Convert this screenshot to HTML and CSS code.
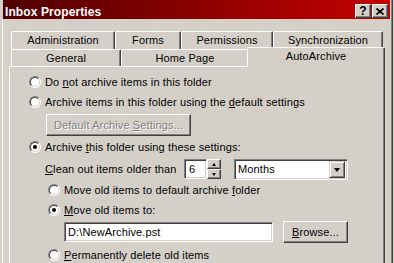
FILE: index.html
```html
<!DOCTYPE html>
<html>
<head>
<meta charset="utf-8">
<link rel="stylesheet" href="styles.css">
</head>
<body>
<div class="window">
  <div class="titlebar">
    <span class="title">Inbox Properties</span>
    <div class="tbtns">
      <span class="tbtn help">?</span>
      <span class="tbtn close"><svg width="8" height="7" viewBox="0 0 8 7"><path d="M0.5 0.5L7.5 6.5M7.5 0.5L0.5 6.5" stroke="#000" stroke-width="1.7"/></svg></span>
    </div>
  </div>
  <div class="client">
    <div class="tabs">
      <div class="tabrow row1">
        <div class="tab">Administration</div>
        <div class="tab">Forms</div>
        <div class="tab">Permissions</div>
        <div class="tab">Synchronization</div>
      </div>
      <div class="tabrow row2">
        <div class="tab">General</div>
        <div class="tab">Home Page</div>
        <div class="tab sel">AutoArchive</div>
      </div>
    </div>
    <div class="panel">
      <div class="row r-top"><span class="radio"></span><span class="lbl">Do <u>n</u>ot archive items in this folder</span></div>
      <div class="row"><span class="radio"></span><span class="lbl">Archive items in this folder using the <u>d</u>efault settings</span></div>
      <div class="btnrow"><span class="btn disabled"><span>Default Archive <u>S</u>ettings...</span></span></div>
      <div class="row r3"><span class="radio on"></span><span class="lbl">Archive <u>t</u>his folder using these settings:</span></div>
      <div class="clean">
        <span class="clean-lbl"><u>C</u>lean out items older than</span>
        <span class="field num">6</span>
        <span class="spin"><span class="sbtn up"></span><span class="sbtn down"></span></span>
        <span class="field combo"><span class="cval">Months</span><span class="dd"></span></span>
      </div>
      <div class="row sub r4"><span class="radio"></span><span class="lbl">Move old items to default archive <u>f</u>older</span></div>
      <div class="row sub"><span class="radio on"></span><span class="lbl"><u>M</u>ove old items to:</span></div>
      <div class="pathrow">
        <span class="field path">D:\NewArchive.pst</span>
        <span class="btn browse"><span><u>B</u>rowse...</span></span>
      </div>
      <div class="row sub r6"><span class="radio"></span><span class="lbl"><u>P</u>ermanently delete old items</span></div>
    </div>
  </div>
</div>
</body>
</html>
```
FILE: styles.css
```css
html, body {
  margin: 0;
  padding: 0;
  background: #d4d0c8;
}
body {
  font-family: "Liberation Sans", Arial, sans-serif;
  font-size: 11px;
  letter-spacing: 0.12px;
  color: #000;
}
.window {
  width: 394px;
  height: 263px;
  overflow: hidden;
  box-sizing: border-box;
  position: relative;
  background: #d4d0c8;
  padding-left: 2px;
}
.window::after {
  content: "";
  position: absolute;
  top: 0;
  bottom: 0;
  left: 392px;
  width: 1px;
  background: #404040;
}
.window::before {
  content: "";
  position: absolute;
  top: 0;
  bottom: 0;
  left: 391px;
  width: 1px;
  background: #808080;
}
.titlebar {
  margin-left: 1px;
  width: 387px;
  height: 19px;
  box-sizing: border-box;
  background: linear-gradient(to right, #500000, #c60000);
  display: flex;
  justify-content: space-between;
  align-items: flex-start;
  padding: 0 2px 0 2px;
}
.title {
  color: #fff;
  font-weight: bold;
  font-size: 12px;
  letter-spacing: 0.1px;
  line-height: 14px;
  padding-top: 5px;
}
.tbtns {
  display: flex;
  gap: 1px;
  margin-top: 4px;
}
.tbtn {
  width: 16px;
  height: 14px;
  box-sizing: border-box;
  background: #d4d0c8;
  border: 1px solid;
  border-color: #fff #404040 #404040 #fff;
  box-shadow: inset -1px -1px #808080;
  display: flex;
  align-items: center;
  justify-content: center;
}
.tbtn.help {
  font-weight: bold;
  font-size: 12px;
  line-height: 12px;
}
.tbtn.close svg {
  display: block;
}
.client {
  border-left: 1px solid #fff;
  height: 244px;
  padding-left: 6px;
}
.tabs {
  padding-top: 12px;
}
.tabrow {
  display: grid;
  margin-left: 2px;
  width: 372px;
}
.row1 {
  grid-template-columns: 104px 66px 92px 110px;
  height: 18px;
}
.row2 {
  grid-template-columns: 110px 128px 134px;
  height: 17px;
}
.tab {
  background: #d4d0c8;
  border-top: 1px solid #fff;
  border-left: 1px solid #fff;
  border-right: 1px solid #404040;
  box-shadow: inset -1px 0 #808080;
  border-radius: 2px 2px 0 0;
  text-align: center;
  line-height: 13px;
  padding-top: 2px;
  position: relative;
}
.tab.sel {
  margin: -2px -2px -1px -2px;
  z-index: 2;
  padding-top: 2px;
}
.panel {
  width: 376px;
  height: 200px;
  box-sizing: border-box;
  border-top: 1px solid #fff;
  border-left: 1px solid #fff;
  border-right: 1px solid #404040;
  box-shadow: inset -1px 0 #808080;
  padding-top: 5px;
  padding-left: 19px;
}
.row {
  display: flex;
  align-items: center;
  height: 20px;
  gap: 4px;
}
.lbl {
  line-height: 13px;
  white-space: nowrap;
}
.radio {
  flex: none;
  width: 12px;
  height: 12px;
  box-sizing: border-box;
  border-radius: 50%;
  border: 1px solid;
  border-color: #808080 #fff #fff #808080;
  background: #fff;
  position: relative;
}
.radio::before {
  content: "";
  position: absolute;
  inset: 0;
  border-radius: 50%;
  border: 1px solid;
  border-color: #404040 #d4d0c8 #d4d0c8 #404040;
}
.radio.on::after {
  content: "";
  position: absolute;
  left: 3px;
  top: 3px;
  width: 4px;
  height: 4px;
  border-radius: 50%;
  background: #000;
}
.btnrow {
  margin-top: 2px;
  margin-left: 17px;
  height: 22px;
}
.btn {
  display: inline-flex;
  align-items: center;
  justify-content: center;
  box-sizing: border-box;
  height: 22px;
  background: #d4d0c8;
  border: 1px solid;
  border-color: #fff #404040 #404040 #fff;
  box-shadow: inset -1px -1px #808080;
  white-space: nowrap;
}
.btn.disabled {
  width: 145px;
  color: #808080;
  text-shadow: 1px 1px 0 #fff;
}
.r3 {
  margin-top: 1px;
}
.clean {
  display: flex;
  align-items: flex-start;
  height: 21px;
  margin-left: 16px;
  margin-top: 2px;
}
.clean-lbl {
  width: 139px;
  line-height: 20px;
  white-space: nowrap;
}
.field {
  box-sizing: border-box;
  background: #fff;
  border: 1px solid;
  border-color: #808080 #fff #fff #808080;
  box-shadow: inset 1px 1px #404040, inset -1px -1px #d4d0c8;
  white-space: nowrap;
}
.num {
  width: 23px;
  height: 20px;
  line-height: 18px;
  padding-left: 4px;
}
.spin {
  display: flex;
  flex-direction: column;
  width: 14px;
  height: 20px;
}
.sbtn {
  height: 10px;
  box-sizing: border-box;
  background: #d4d0c8;
  border: 1px solid;
  border-color: #fff #404040 #404040 #fff;
  box-shadow: inset -1px -1px #808080;
  display: flex;
  align-items: center;
  justify-content: center;
}
.sbtn::after {
  content: "";
  width: 0;
  height: 0;
  border-left: 2.5px solid transparent;
  border-right: 2.5px solid transparent;
}
.sbtn.up::after {
  border-bottom: 3px solid #000;
}
.sbtn.down::after {
  border-top: 3px solid #000;
}
.combo {
  margin-left: 13px;
  width: 114px;
  height: 21px;
  display: flex;
  align-items: center;
  justify-content: space-between;
  padding: 2px;
}
.cval {
  padding-left: 1px;
  line-height: 15px;
}
.dd {
  width: 16px;
  height: 17px;
  box-sizing: border-box;
  background: #d4d0c8;
  border: 1px solid;
  border-color: #d4d0c8 #404040 #404040 #d4d0c8;
  box-shadow: inset 1px 1px #fff, inset -1px -1px #808080;
  display: flex;
  align-items: center;
  justify-content: center;
}
.dd::after {
  content: "";
  border-left: 3.5px solid transparent;
  border-right: 3.5px solid transparent;
  border-top: 4px solid #000;
}
.sub {
  margin-left: 19px;
}
.pathrow {
  display: flex;
  align-items: center;
  height: 22px;
  margin-left: 35px;
  margin-top: 1px;
}
.path {
  width: 209px;
  height: 20px;
  line-height: 18px;
  padding-left: 3px;
}
.browse {
  margin-left: 10px;
  width: 65px;
}
.r6 {
  margin-top: 2px;
}
u {
  text-decoration-thickness: 1px;
  text-underline-offset: 1px;
}
```
